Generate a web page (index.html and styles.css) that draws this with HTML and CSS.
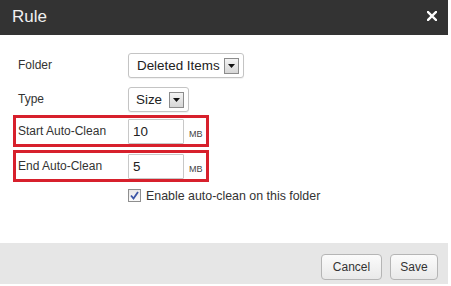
FILE: index.html
```html
<!DOCTYPE html>
<html>
<head>
<meta charset="utf-8">
<link rel="stylesheet" href="styles.css">
</head>
<body>
<div class="dialog">
  <div class="header">
    <span class="title">Rule</span>
    <svg class="close" width="10" height="10" viewBox="0 0 10 10"><path d="M1 1L9 9M9 1L1 9" stroke="#fff" stroke-width="2.4" stroke-linecap="square"/></svg>
  </div>
  <div class="body">
    <div class="row r1">
      <span class="label">Folder</span>
      <div class="select sel-folder"><span class="sel-text">Deleted Items</span><span class="arrow"><svg width="7" height="4" viewBox="0 0 7 4"><path d="M0 0H7L3.5 4Z" fill="#111"/></svg></span></div>
    </div>
    <div class="row r2">
      <span class="label">Type</span>
      <div class="select sel-type"><span class="sel-text">Size</span><span class="arrow"><svg width="7" height="4" viewBox="0 0 7 4"><path d="M0 0H7L3.5 4Z" fill="#111"/></svg></span></div>
    </div>
    <div class="row hl r3">
      <span class="label">Start Auto-Clean</span>
      <div class="input">10</div>
      <span class="unit">MB</span>
    </div>
    <div class="row hl r4">
      <span class="label">End Auto-Clean</span>
      <div class="input">5</div>
      <span class="unit">MB</span>
    </div>
    <div class="check-row">
      <span class="checkbox"><svg width="9" height="9" viewBox="0 0 9 9"><path d="M1 4.5L3.5 7.5L8 1" fill="none" stroke="#3b55a6" stroke-width="1.8"/></svg></span>
      <span class="check-label">Enable auto-clean on this folder</span>
    </div>
  </div>
  <div class="footer">
    <button class="btn btn-cancel">Cancel</button>
    <button class="btn btn-save">Save</button>
  </div>
</div>
</body>
</html>
```
FILE: styles.css
```css
html, body {
  margin: 0;
  padding: 0;
  background: #fff;
}
body {
  font-family: "Liberation Sans", Arial, sans-serif;
  color: #333;
}
.dialog {
  width: 448px;
  height: 284px;
  display: flex;
  flex-direction: column;
}
.header {
  height: 35px;
  background: #333333;
  display: flex;
  align-items: center;
  justify-content: space-between;
  padding: 0 11px 0 12px;
  box-sizing: border-box;
}
.title {
  color: #f0f0f0;
  font-size: 17px;
  line-height: 20px;
  margin-top: -2px;
}
.close {
  display: block;
  margin-top: -3px;
}
.body {
  flex: 1;
  padding: 14px 0 0 13px;
  box-sizing: border-box;
}
.row {
  display: flex;
  align-items: center;
  height: 32px;
  box-sizing: border-box;
  border: 3px solid transparent;
  padding-left: 2px;
  width: 196px;
}
.r2 { margin-top: 2px; }
.r3 { margin-top: 0; }
.r4 { margin-top: 3px; }
.hl {
  border-color: #d7202c;
}
.label {
  width: 110px;
  flex: none;
  font-size: 12px;
}
.select {
  flex: none;
  height: 25px;
  box-sizing: border-box;
  border: 1px solid #c4c4c4;
  border-radius: 3px;
  background: #fff;
  display: flex;
  align-items: center;
  box-shadow: 0 1px 1px rgba(0,0,0,0.06);
}
.sel-folder { width: 116px; padding-left: 8px; }
.sel-type { width: 61px; padding-left: 7px; }
.sel-text {
  font-size: 13.4px;
  color: #222;
}
.sel-folder .sel-text { margin-right: 4px; }
.sel-type .sel-text { margin-right: 7px; }
.arrow {
  width: 15px;
  height: 16px;
  box-sizing: border-box;
  border: 1px solid #8c8c8c;
  background: linear-gradient(#f4f4f4, #d6d6d6);
  display: flex;
  align-items: center;
  justify-content: center;
  margin-top: 1px;
}
.arrow svg { display: block; }
.input {
  width: 56px;
  height: 25px;
  box-sizing: border-box;
  border: 1px solid #c8c8c8;
  border-radius: 1px;
  font-size: 13.4px;
  line-height: 23px;
  padding-left: 4px;
  color: #222;
  margin-top: 1px;
  flex: none;
}
.unit {
  font-size: 9px;
  margin-left: 5px;
  margin-top: 5px;
  color: #444;
}
.check-row {
  display: flex;
  align-items: center;
  margin: 7px 0 0 115px;
  height: 13px;
}
.checkbox {
  width: 13px;
  height: 13px;
  box-sizing: border-box;
  border: 1px solid #8f8f8f;
  background: linear-gradient(#e8e8e8, #fafafa);
  display: flex;
  align-items: center;
  justify-content: center;
}
.checkbox svg { display: block; }
.check-label {
  font-size: 12.4px;
  margin-left: 5px;
}
.footer {
  height: 41px;
  background: #e6e6e6;
  display: flex;
  justify-content: flex-end;
  align-items: flex-start;
  gap: 8px;
  padding: 11px 10px 0 0;
  box-sizing: border-box;
}
.btn {
  height: 26px;
  box-sizing: border-box;
  border: 1px solid #b5b5b5;
  border-radius: 4px;
  background: linear-gradient(#fbfbfb, #e9e9e9);
  font-family: "Liberation Sans", Arial, sans-serif;
  font-size: 12px;
  color: #333;
  padding: 0;
  margin: 0;
}
.btn-cancel { width: 61px; }
.btn-save { width: 48px; }
```
